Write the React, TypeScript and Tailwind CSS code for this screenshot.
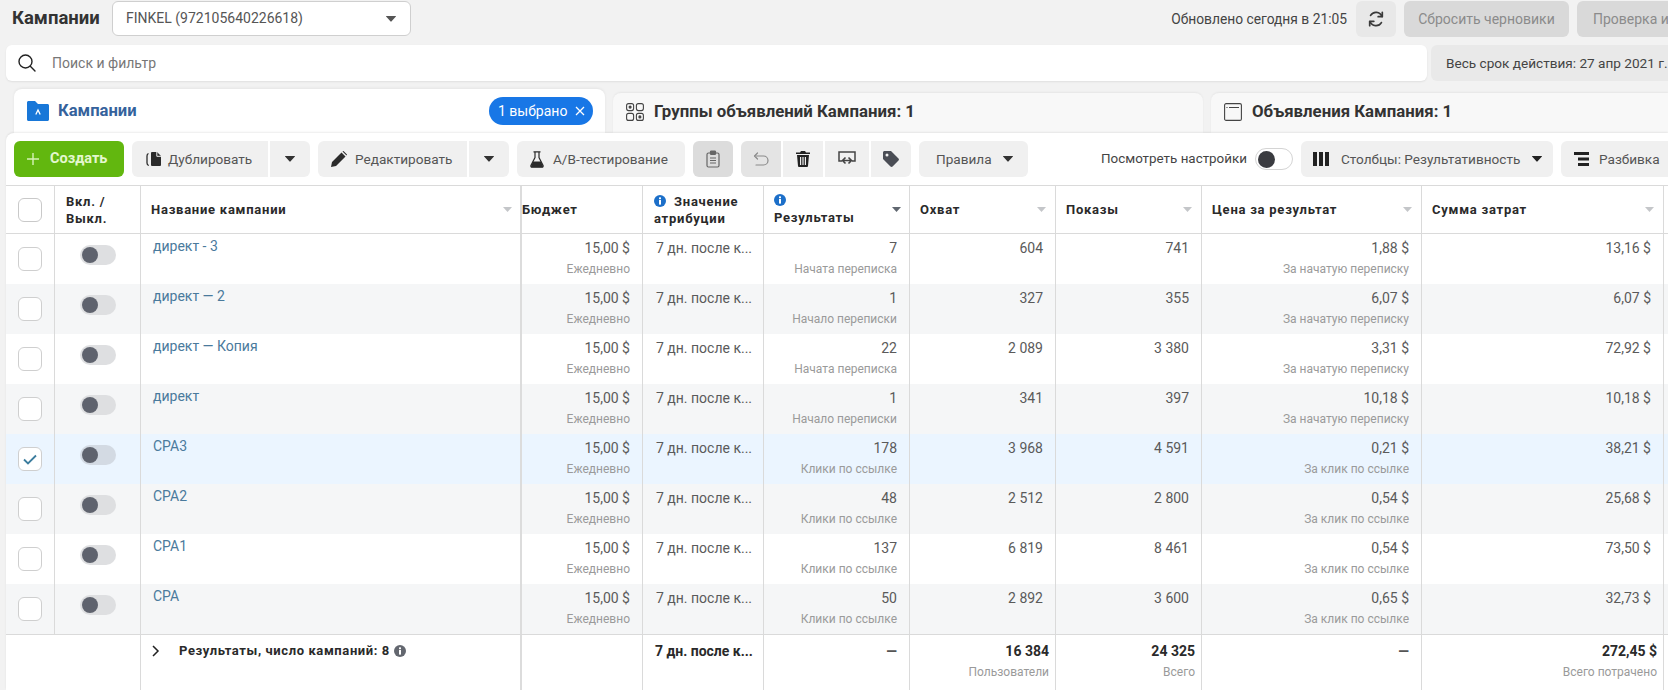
import React from "react";

const Caret = ({ className = "" }: { className?: string }) => (
  <svg viewBox="0 0 10 6" className={`w-[10px] h-[6px] shrink-0 ${className}`} fill="currentColor">
    <path d="M0.3 0h9.4c.3 0 .4.3.2.5L5.4 5.6c-.2.2-.6.2-.8 0L.1.5C-.1.3 0 0 .3 0z" />
  </svg>
);

const SortCaret = ({ dark = false }: { dark?: boolean }) => (
  <svg viewBox="0 0 9 5" className={`w-[9px] h-[5px] shrink-0 ${dark ? "text-[#606770]" : "text-[#c4c6c9]"}`} fill="currentColor">
    <path d="M0 0h9L4.5 5z" />
  </svg>
);

const Info = ({ className = "text-[#1c6fc9]" }: { className?: string }) => (
  <svg viewBox="0 0 12 12" className={`w-[12px] h-[12px] shrink-0 ${className}`}>
    <circle cx="6" cy="6" r="6" fill="currentColor" />
    <rect x="5" y="5" width="2" height="4.6" fill="#fff" />
    <rect x="5" y="2.4" width="2" height="1.8" fill="#fff" />
  </svg>
);

const Btn = ({ className = "", bg = "bg-[#f0f0f0]", children }: { className?: string; bg?: string; children: React.ReactNode }) => (
  <div className={`h-9 shrink-0 rounded-md ${bg} flex items-center text-[13.6px] text-[#555] whitespace-nowrap ${className}`}>{children}</div>
);

type Row = {
  name: string;
  res: string;
  resSub: string;
  reach: string;
  imp: string;
  price: string;
  priceSub: string;
  spend: string;
  bg: string;
  checked?: boolean;
};

const rows: Row[] = [
  { name: "директ - 3", res: "7", resSub: "Начата переписка", reach: "604", imp: "741", price: "1,88 $", priceSub: "За начатую переписку", spend: "13,16 $", bg: "bg-white" },
  { name: "директ — 2", res: "1", resSub: "Начало переписки", reach: "327", imp: "355", price: "6,07 $", priceSub: "За начатую переписку", spend: "6,07 $", bg: "bg-[#f5f6f7]" },
  { name: "директ — Копия", res: "22", resSub: "Начата переписка", reach: "2 089", imp: "3 380", price: "3,31 $", priceSub: "За начатую переписку", spend: "72,92 $", bg: "bg-white" },
  { name: "директ", res: "1", resSub: "Начало переписки", reach: "341", imp: "397", price: "10,18 $", priceSub: "За начатую переписку", spend: "10,18 $", bg: "bg-[#f5f6f7]" },
  { name: "CPA3", res: "178", resSub: "Клики по ссылке", reach: "3 968", imp: "4 591", price: "0,21 $", priceSub: "За клик по ссылке", spend: "38,21 $", bg: "bg-[#ebf5ff]", checked: true },
  { name: "CPA2", res: "48", resSub: "Клики по ссылке", reach: "2 512", imp: "2 800", price: "0,54 $", priceSub: "За клик по ссылке", spend: "25,68 $", bg: "bg-[#f5f6f7]" },
  { name: "CPA1", res: "137", resSub: "Клики по ссылке", reach: "6 819", imp: "8 461", price: "0,54 $", priceSub: "За клик по ссылке", spend: "73,50 $", bg: "bg-white" },
  { name: "CPA", res: "50", resSub: "Клики по ссылке", reach: "2 892", imp: "3 600", price: "0,65 $", priceSub: "За клик по ссылке", spend: "32,73 $", bg: "bg-[#f5f6f7]" },
];

const Num = ({ w, v, sub }: { w: string; v: string; sub?: string }) => (
  <div className={`${w} shrink-0 h-full border-r border-[#dadada] pr-3 pt-1 text-right`}>
    <div className="text-[14px] leading-5 text-[#5a5a5a]">{v}</div>
    {sub && <div className="text-[12px] leading-5 mt-px text-[#9a9a9a] whitespace-nowrap">{sub}</div>}
  </div>
);

const Foot = ({ w, v, sub }: { w: string; v: string; sub?: string }) => (
  <div className={`${w} shrink-0 h-full border-r border-[#dadada] pr-[6px] pt-[6px] text-right`}>
    <div className="text-[14px] leading-5 font-bold text-[#2a2a2a]">{v}</div>
    {sub && <div className="text-[12px] leading-5 mt-px text-[#9a9a9a] whitespace-nowrap">{sub}</div>}
  </div>
);

const Head = ({ w, label }: { w: string; label: string }) => (
  <div className={`${w} shrink-0 h-full border-r border-[#dadada] pl-[10px] pr-[9px] flex items-center justify-between`}>
    <span className="text-[13px] font-bold text-[#2a2a2a] tracking-[0.75px] whitespace-nowrap">{label}</span>
    <SortCaret />
  </div>
);

export default function App() {
  return (
    <div className="w-[1668px] h-[690px] overflow-hidden bg-[#f2f2f2] font-[family-name:Roboto]">
      {/* top row */}
      <div className="h-[45px] flex items-start pl-[12px] pt-px">
        <div className="h-9 flex items-center text-[18.5px] font-bold text-[#333] w-[100px] shrink-0">Кампании</div>
        <div className="h-[35px] w-[299px] shrink-0 bg-white border border-[#cfcfcf] rounded-md flex items-center justify-between pl-[13px] pr-[14px] text-[14px] text-[#555]">
          <span>FINKEL (972105640226618)</span>
          <Caret className="text-[#555]" />
        </div>
        <div className="ml-auto flex items-center">
          <span className="text-[13.8px] text-[#444] mr-[9px] whitespace-nowrap">Обновлено сегодня в 21:05</span>
          <div className="w-10 h-9 rounded-md bg-[#e8e8e8] flex items-center justify-center mr-2 shrink-0">
            <svg viewBox="0 0 20 20" className="w-[18px] h-[18px] text-[#3a3a3a]" fill="none" stroke="currentColor" strokeWidth="1.9" strokeLinecap="round">
              <path d="M16.6 7.2A7 7 0 0 0 4 6" />
              <path d="M3.4 12.8A7 7 0 0 0 16 14" />
              <path d="M17 2.6v4.8h-4.6" strokeLinejoin="round" />
              <path d="M3 17.4v-4.8h4.6" strokeLinejoin="round" />
            </svg>
          </div>
          <div className="w-[165px] h-9 rounded-md bg-[#d9d9d9] flex items-center justify-center text-[14px] text-[#8b8b8b] mr-2 shrink-0 whitespace-nowrap">Сбросить черновики</div>
          <div className="w-[91px] h-9 rounded-l-md bg-[#d9d9d9] flex items-center pl-4 text-[14px] text-[#8b8b8b] whitespace-nowrap shrink-0">Проверка и</div>
        </div>
      </div>

      {/* search row */}
      <div className="h-9 flex pl-[6px]">
        <div className="w-[1421px] shrink-0 bg-white rounded-md flex items-center pl-3 shadow-[0_1px_2px_rgba(0,0,0,0.08)]">
          <svg viewBox="0 0 18 18" className="w-[18px] h-[18px] text-[#222]" fill="none" stroke="currentColor" strokeWidth="1.4" strokeLinecap="round">
            <circle cx="7.5" cy="7.5" r="6.5" />
            <path d="M12.3 12.3L17 17" />
          </svg>
          <span className="ml-[16px] text-[14px] text-[#777]">Поиск и фильтр</span>
        </div>
        <div className="ml-[4px] flex-1 bg-[#e9e9e9] rounded-l-md flex items-center pl-[15px] text-[13.6px] text-[#444] whitespace-nowrap">Весь срок действия: 27 апр 2021 г.</div>
      </div>

      {/* tabs */}
      <div className="h-[44px] mt-2 flex items-end pl-[14px] gap-2">
        <div className="w-[591px] h-[44px] shrink-0 bg-white rounded-t-lg flex items-start pt-2 pl-[13px] pr-3 shadow-[0_-1px_3px_rgba(0,0,0,0.06)]">
          <svg viewBox="0 0 22 20" className="w-[22px] h-[20px] mt-1 shrink-0">
            <path d="M0 1.5C0 .7.7 0 1.5 0H8l3 3h9.5c.8 0 1.5.7 1.5 1.5v14c0 .8-.7 1.5-1.5 1.5h-19C.7 20 0 19.300 0 18.500z" fill="#1877d8" />
            <path d="M8.800 13.500L11 9l2.200 4.500" fill="none" stroke="#fff" strokeWidth="1.300" />
          </svg>
          <span className="ml-[9px] h-7 flex items-center text-[16.6px] font-bold text-[#35629c]">Кампании</span>
          <div className="ml-auto w-[104px] h-7 rounded-full bg-[#1877e6] flex items-center pl-[9px] text-[14px] text-white whitespace-nowrap">
            <span>1 выбрано</span>
            <svg viewBox="0 0 10 10" className="w-[10px] h-[10px] ml-[8px]" fill="none" stroke="currentColor" strokeWidth="1.300">
              <path d="M1 1l8 8M9 1l-8 8" />
            </svg>
          </div>
        </div>
        <div className="w-[590px] h-10 shrink-0 bg-[#f8f8f8] rounded-t-lg flex items-center pl-[13px] pb-[2px] shadow-[0_-1px_2px_rgba(0,0,0,0.05)]">
          <svg viewBox="0 0 18 18" className="w-[18px] h-[18px] shrink-0" fill="none" stroke="#444" strokeWidth="1.100">
            <rect x=".6" y=".6" width="7" height="7" rx="2" />
            <rect x="10.400" y=".6" width="7" height="7" rx="2" />
            <rect x=".6" y="10.400" width="7" height="7" rx="2" />
            <rect x="10.400" y="10.400" width="7" height="7" rx="2" />
            <circle cx="4.100" cy="4.100" r="1" fill="#444" />
            <circle cx="13.900" cy="13.900" r="1" fill="#444" />
          </svg>
          <span className="ml-[10px] text-[16.8px] font-bold text-[#333] whitespace-nowrap">Группы объявлений Кампания: 1</span>
        </div>
        <div className="flex-1 h-10 bg-[#f8f8f8] rounded-tl-lg flex items-center pl-[13px] pb-[2px] shadow-[0_-1px_2px_rgba(0,0,0,0.05)]">
          <svg viewBox="0 0 18 18" className="w-[18px] h-[18px] shrink-0" fill="none" stroke="#444" strokeWidth="1.100">
            <rect x=".6" y=".6" width="16.800" height="16.800" rx="1.500" />
            <path d="M5 4.500h10M2.500 4.500h1M3 4v1" />
          </svg>
          <span className="ml-[10px] text-[16.8px] font-bold text-[#333] whitespace-nowrap">Объявления Кампания: 1</span>
        </div>
      </div>

      {/* panel */}
      <div className="ml-[6px] bg-white rounded-tl-lg shadow-[0_-1px_2px_rgba(0,0,0,0.08)] relative">
        {/* toolbar */}
        <div className="h-[53px] flex items-start pt-2 pl-2 border-b border-[#dadada]">
          <div className="w-[110px] h-9 shrink-0 rounded-md bg-[#62b70f] flex items-center pl-[13px] text-white">
            <svg viewBox="0 0 12 12" className="w-[12px] h-[12px]" fill="none" stroke="#d6f2b8" strokeWidth="1.400"><path d="M6 0v12M0 6h12" /></svg>
            <span className="ml-[11px] text-[14.5px] font-bold text-[#e4f7cf]">Создать</span>
          </div>
          <Btn className="ml-2 w-[136px] pl-[12px] rounded-r-none">
            <svg viewBox="0 0 18 16" className="w-[18px] h-[16px]" fill="#2b2b2b">
              <path d="M8 1h5l4 4v9a1 1 0 0 1-1 1H8a1 1 0 0 1-1-1V2a1 1 0 0 1 1-1z" />
              <path d="M4.500 2.500C3 3 3 4 3 5v7c0 1.200.5 2 1.800 2.500" fill="none" stroke="#2b2b2b" strokeWidth="1.300" />
              <path d="M12.800 1v4.300H17" fill="none" stroke="#f0f0f0" strokeWidth="1" />
            </svg>
            <span className="ml-[6px]">Дублировать</span>
          </Btn>
          <Btn className="ml-[2px] w-10 justify-center rounded-l-none"><Caret className="text-[#333]" /></Btn>
          <Btn className="ml-2 w-[149px] pl-[13px] rounded-r-none">
            <svg viewBox="0 0 16 16" className="w-[16px] h-[16px]" fill="#2b2b2b"><path d="M0 16l1-5L10.500 1.500l4 4L5 15zM11.500.5l1-.5 3.500 3.500-.5 1z" /></svg>
            <span className="ml-[8px]">Редактировать</span>
          </Btn>
          <Btn className="ml-[2px] w-10 justify-center rounded-l-none"><Caret className="text-[#333]" /></Btn>
          <Btn className="ml-2 w-[168px] pl-[13px]">
            <svg viewBox="0 0 14 17" className="w-[14px] h-[17px]" fill="none" stroke="#2b2b2b" strokeWidth="1.200">
              <path d="M3.500.8h7M5 1v5.500L.9 14.500c-.3.8.2 1.700 1 1.700h10.200c.8 0 1.300-.9 1-1.700L9 6.500V1" />
              <path d="M3 10.500h8l2 4.500c.2.600-.2 1.200-.9 1.200H1.900c-.7 0-1.100-.6-.9-1.200z" fill="#2b2b2b" stroke="none" />
            </svg>
            <span className="ml-[9px]">A/B-тестирование</span>
          </Btn>
          <Btn bg="bg-[#dcdcdc]" className="ml-2 w-10 justify-center">
            <svg viewBox="0 0 14 18" className="w-[14px] h-[18px]" fill="none" stroke="#666" strokeWidth="1.200">
              <rect x="1" y="3" width="12" height="14" rx="1.500" />
              <rect x="4.500" y="1" width="5" height="3.500" rx=".8" fill="#666" />
              <path d="M4 8h6M4 10.500h6M4 13h6" />
            </svg>
          </Btn>
          <Btn bg="bg-[#e4e4e4]" className="ml-2 w-10 justify-center rounded-r-none">
            <svg viewBox="0 0 16 14" className="w-[16px] h-[14px]" fill="none" stroke="#8a8a8a" strokeWidth="1.200" strokeLinecap="round" strokeLinejoin="round">
              <path d="M4.500 1L1.500 4l3 3" />
              <path d="M2 4h8.500a4.500 4.500 0 0 1 0 9H3" />
            </svg>
          </Btn>
          <Btn className="ml-[2px] w-10 justify-center rounded-none">
            <svg viewBox="0 0 14 16" className="w-[14px] h-[16px]" fill="#222">
              <path d="M5 0h4l1 1.500h4v1.500H0V1.500h4z" />
              <path d="M1 4h12l-1 11a1 1 0 0 1-1 1H3a1 1 0 0 1-1-1zM4 6v8h1.200V6zM6.400 6v8h1.200V6zM8.800 6v8H10V6z" fillRule="evenodd" />
            </svg>
          </Btn>
          <Btn className="ml-[2px] w-[44px] justify-center rounded-none">
            <svg viewBox="0 0 18 17" className="w-[18px] h-[17px]" fill="none" stroke="#444" strokeWidth="1.500">
              <path d="M4 10H1V1h16v9h-3" />
              <path d="M7.500 6.500L4.500 9.500l3 3M10.500 6.500l3 3-3 3M5 9.500h8" strokeWidth="1.600" />
            </svg>
          </Btn>
          <Btn className="ml-[2px] w-10 justify-center rounded-l-none">
            <svg viewBox="0 0 16 16" className="w-[16px] h-[16px]" fill="#4a4d55">
              <path fillRule="evenodd" d="M0 1.500C0 .7.700 0 1.500 0H8l7.500 7.500c.6.600.6 1.500 0 2.100l-5.900 5.900c-.6.600-1.500.6-2.100 0L0 8zM4 5.500a1.500 1.500 0 1 0 0-3 1.500 1.500 0 0 0 0 3z" />
            </svg>
          </Btn>
          <Btn className="ml-2 w-[109px] pl-[17px]">
            <span>Правила</span>
            <Caret className="ml-[11px] text-[#333]" />
          </Btn>
          <span className="ml-[73px] h-9 flex items-center text-[13.4px] text-[#444] whitespace-nowrap w-[146px] shrink-0">Посмотреть настройки</span>
          <div className="ml-[8px] mt-[7px] w-[38px] h-[22px] shrink-0 rounded-full border border-[#d4d4d4] bg-white flex items-center pl-[2px]">
            <div className="w-[17px] h-[17px] rounded-full bg-[#3a3b40]" />
          </div>
          <Btn className="ml-2 w-[252px] pl-[12px]">
            <svg viewBox="0 0 16 14" className="w-[16px] h-[14px]" fill="#222"><path d="M0 0h4v14H0zM6 0h4v14H6zM12 0h4v14h-4z" /></svg>
            <span className="ml-[12px]">Столбцы: Результативность</span>
            <Caret className="ml-[12px] text-[#222]" />
          </Btn>
          <Btn className="ml-2 flex-1 pl-[13px] rounded-r-none">
            <svg viewBox="0 0 15 14" className="w-[15px] h-[14px]" fill="#222"><path d="M0 0h15v3H0zM4 5.500h11v3H4zM4 11h11v3H4z" /></svg>
            <span className="ml-[10px]">Разбивка</span>
          </Btn>
        </div>

        {/* header */}
        <div className="h-[48px] flex border-b border-[#dadada] bg-white">
          <div className="w-[49px] shrink-0 h-full border-r border-[#dadada] flex items-center justify-center">
            <div className="w-6 h-6 rounded-md border border-[#c9c9c9] bg-white" />
          </div>
          <div className="w-[86px] shrink-0 h-full border-r border-[#dadada] pl-[11px] flex items-center text-[13px] font-bold leading-[17px] tracking-[0.75px] text-[#2a2a2a]">
            <span>Вкл. /<br />Выкл.</span>
          </div>
          <div className="w-[381px] shrink-0 h-full pl-[10px] pr-[8px] flex items-center justify-between border-r-2 border-[#dcdcdc]">
            <span className="text-[13px] font-bold text-[#2a2a2a] tracking-[0.75px]">Название кампании</span>
            <SortCaret />
          </div>
          <div className="w-[121px] shrink-0 h-full border-r border-[#dadada] flex items-center">
            <span className="text-[13px] font-bold text-[#2a2a2a] tracking-[0.75px]">Бюджет</span>
          </div>
          <div className="w-[121px] shrink-0 h-full border-r border-[#dadada] pl-[11px] flex flex-col justify-center text-[13px] font-bold leading-[17px] tracking-[0.75px] text-[#2a2a2a]">
            <div className="flex items-center gap-2"><Info /><span>Значение</span></div>
            <div>атрибуции</div>
          </div>
          <div className="w-[146px] shrink-0 h-full border-r border-[#dadada] pl-[10px] pr-[8px] flex items-center justify-between">
            <div className="text-[13px] font-bold leading-[17px] tracking-[0.75px] text-[#2a2a2a]">
              <Info />
              <div className="mt-[3px]">Результаты</div>
            </div>
            <SortCaret dark />
          </div>
          <Head w="w-[146px]" label="Охват" />
          <Head w="w-[146px]" label="Показы" />
          <Head w="w-[220px]" label="Цена за результат" />
          <Head w="w-[242px]" label="Сумма затрат" />
        </div>

        {/* rows */}
        {rows.map((r) => (
          <div key={r.name} className={`h-[50px] flex ${r.bg}`}>
            <div className="w-[49px] shrink-0 h-full border-r border-[#dadada] flex justify-center pt-[13px]">
              <div className="w-6 h-6 rounded-md border border-[#cfcfcf] bg-white flex items-center justify-center">
                {r.checked && (
                  <svg viewBox="0 0 14 11" className="w-[14px] h-[11px]" fill="none" stroke="#3c7d9e" strokeWidth="1.800">
                    <path d="M1 5.500l4 4 8-8" />
                  </svg>
                )}
              </div>
            </div>
            <div className="w-[86px] shrink-0 h-full border-r border-[#dadada] pl-[25px] pt-[11px]">
              <div className={`w-9 h-5 rounded-full flex items-center pl-[2px] ${r.checked ? "bg-[#d3dae3]" : "bg-[#dedfe1]"}`}>
                <div className="w-4 h-4 rounded-full bg-[#5f636e]" />
              </div>
            </div>
            <div className="w-[381px] shrink-0 h-full pl-3 border-r-2 border-[#dcdcdc]">
              <div className="text-[14px] leading-5 pt-[2px] text-[#4a7a9c]">{r.name}</div>
            </div>
            <Num w="w-[121px]" v="15,00 $" sub="Ежедневно" />
            <div className="w-[121px] shrink-0 h-full border-r border-[#dadada] pl-[13px] pt-1 text-[14px] leading-5 text-[#5a5a5a] whitespace-nowrap">7 дн. после к...</div>
            <Num w="w-[146px]" v={r.res} sub={r.resSub} />
            <Num w="w-[146px]" v={r.reach} />
            <Num w="w-[146px]" v={r.imp} />
            <Num w="w-[220px]" v={r.price} sub={r.priceSub} />
            <Num w="w-[242px]" v={r.spend} />
          </div>
        ))}

        {/* footer */}
        <div className="h-[56px] flex border-t border-[#dadada] bg-white">
          <div className="w-[135px] shrink-0 h-full border-r border-[#dadada]" />
          <div className="w-[381px] shrink-0 h-full pl-[11px] pt-[6px] flex items-start border-r-2 border-[#dcdcdc]">
            <svg viewBox="0 0 8 12" className="w-[8px] h-[12px] mt-1 shrink-0" fill="none" stroke="#222" strokeWidth="1.500"><path d="M1 1l5 5-5 5" /></svg>
            <span className="ml-[19px] text-[13px] leading-5 font-bold text-[#2a2a2a] tracking-[0.6px] whitespace-nowrap">Результаты, число кампаний: 8</span>
            <Info className="ml-1 mt-1 text-[#63676f]" />
          </div>
          <div className="w-[121px] shrink-0 h-full border-r border-[#dadada]" />
          <div className="w-[121px] shrink-0 h-full border-r border-[#dadada] pl-3 pt-[6px] text-[14px] leading-5 font-bold text-[#2a2a2a] whitespace-nowrap">7 дн. после к...</div>
          <div className="w-[146px] shrink-0 h-full border-r border-[#dadada] pr-3 pt-[6px] text-right text-[14px] leading-5 font-bold text-[#555]">—</div>
          <Foot w="w-[146px]" v="16 384" sub="Пользователи" />
          <Foot w="w-[146px]" v="24 325" sub="Всего" />
          <div className="w-[220px] shrink-0 h-full border-r border-[#dadada] pr-3 pt-[6px] text-right text-[14px] leading-5 font-bold text-[#555]">—</div>
          <Foot w="w-[242px]" v="272,45 $" sub="Всего потрачено" />
        </div>
      </div>
    </div>
  );
}
